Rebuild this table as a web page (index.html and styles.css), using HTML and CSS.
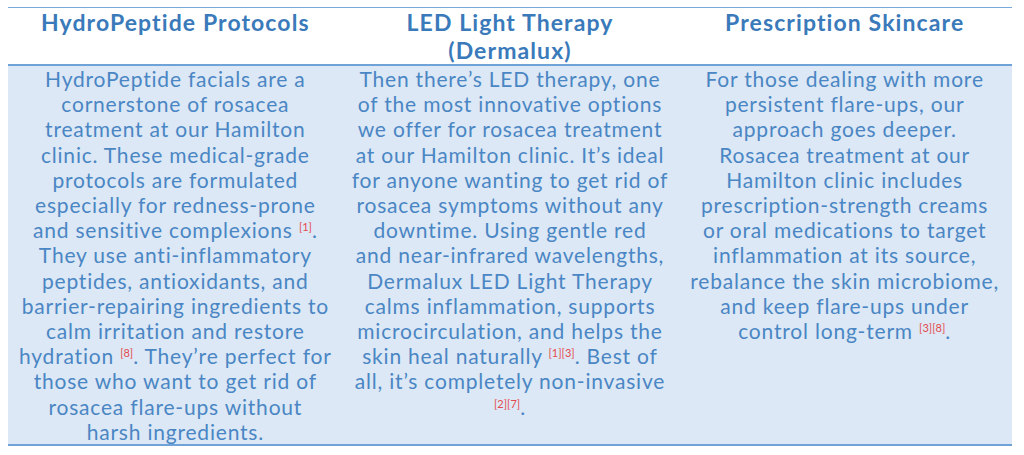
FILE: index.html
```html
<!DOCTYPE html>
<html lang="en">
<head>
<meta charset="utf-8">
<title>Rosacea treatments</title>
<link rel="stylesheet" href="styles.css">
</head>
<body>
<div class="table">
  <div class="row head">
    <div class="cell">HydroPeptide Protocols</div>
    <div class="cell">LED Light Therapy<br>(Dermalux)</div>
    <div class="cell">Prescription Skincare</div>
  </div>
  <div class="row body-row">
    <div class="cell">HydroPeptide facials are a<br>cornerstone of rosacea<br>treatment at our Hamilton<br>clinic. These medical-grade<br>protocols are formulated<br>especially for redness-prone<br>and sensitive complexions <sup class="ref">[1]</sup>.<br>They use anti-inflammatory<br>peptides, antioxidants, and<br>barrier-repairing ingredients to<br>calm irritation and restore<br>hydration <sup class="ref">[8]</sup>. They’re perfect for<br>those who want to get rid of<br>rosacea flare-ups without<br>harsh ingredients.</div>
    <div class="cell">Then there’s LED therapy, one<br>of the most innovative options<br>we offer for rosacea treatment<br>at our Hamilton clinic. It’s ideal<br>for anyone wanting to get rid of<br>rosacea symptoms without any<br>downtime. Using gentle red<br>and near-infrared wavelengths,<br>Dermalux LED Light Therapy<br>calms inflammation, supports<br>microcirculation, and helps the<br>skin heal naturally <sup class="ref">[1][3]</sup>. Best of<br>all, it’s completely non-invasive<br><sup class="ref">[2][7]</sup>.</div>
    <div class="cell">For those dealing with more<br>persistent flare-ups, our<br>approach goes deeper.<br>Rosacea treatment at our<br>Hamilton clinic includes<br>prescription-strength creams<br>or oral medications to target<br>inflammation at its source,<br>rebalance the skin microbiome,<br>and keep flare-ups under<br>control long-term <sup class="ref">[3][8]</sup>.</div>
  </div>
</div>
</body>
</html>
```
FILE: styles.css
```css
html, body {
  background: #ffffff;
}
body {
  margin: 7px 12px 0 8px;
  font-family: "Lato", "Open Sans", "Liberation Sans", sans-serif;
}
.table {
  width: 1004px;
}
.row {
  display: grid;
  grid-template-columns: repeat(3, 1fr);
}
.head {
  border-top: 1px solid #78a9dc;
  border-bottom: 2px solid #6fa3d8;
  height: 56px;
}
.head .cell {
  font-weight: 700;
  font-size: 23px;
  letter-spacing: 1.1px;
  line-height: 28px;
  color: #3a7aba;
  text-align: center;
}
.body-row {
  background: #dce8f5;
  border-bottom: 2px solid #6fa3d8;
  height: 378px;
}
.body-row .cell {
  font-size: 21px;
  letter-spacing: 0.8px;
  line-height: 25.2px;
  color: #4a86c4;
  text-align: center;
}
.ref {
  color: #e5484d;
  font-size: 11px;
  letter-spacing: 0;
  line-height: 0;
  vertical-align: 7px;
}
```
